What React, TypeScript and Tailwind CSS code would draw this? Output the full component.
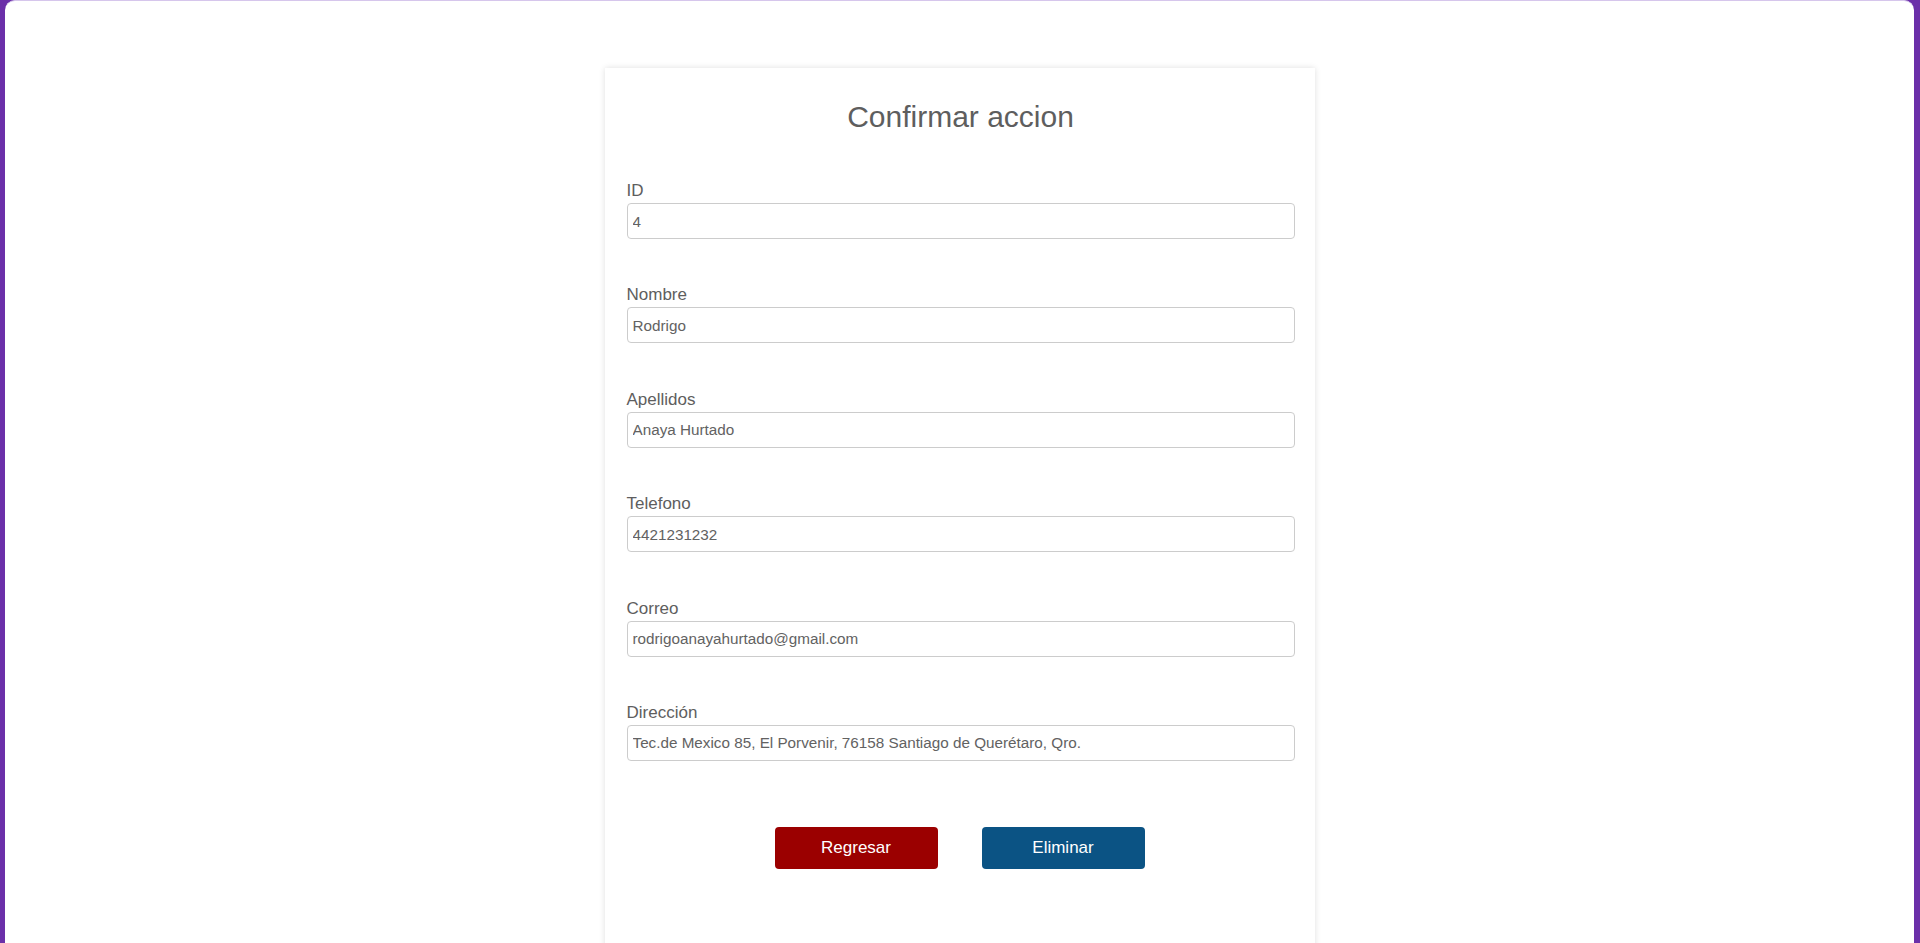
import React from "react";

const fields: { label: string; value: string }[] = [
  { label: "ID", value: "4" },
  { label: "Nombre", value: "Rodrigo" },
  { label: "Apellidos", value: "Anaya Hurtado" },
  { label: "Telefono", value: "4421231232" },
  { label: "Correo", value: "rodrigoanayahurtado@gmail.com" },
  { label: "Dirección", value: "Tec.de Mexico 85, El Porvenir, 76158 Santiago de Querétaro, Qro." },
];

export default function App() {
  return (
    <div
      className="h-[943px] overflow-hidden bg-[#6b2fa9] flex pl-[5px] pr-[6px]"
      style={{ fontFamily: '"Liberation Sans", Arial, sans-serif' }}
    >
      <div className="flex-1 bg-white rounded-t-[10px] border-t border-[#d6c6ec] pt-[67px] overflow-hidden">
        <div className="mx-auto w-[710px] min-h-[900px] bg-white shadow-[0_0_6px_rgba(0,0,0,0.13)] pl-[22px] pr-[20px] pt-[32px]">
          <h1 className="text-[30px] leading-[34px] text-center text-[#5e5e5e] font-normal">
            Confirmar accion
          </h1>
          <form className="mt-[47px]">
            {fields.map((f, i) => (
              <div key={f.label} className={i === 0 ? "" : "mt-[46.4px]"}>
                <label className="block text-[17px] leading-[20px] text-[#5e5e5e] mb-[2px]">
                  {f.label}
                </label>
                <input
                  readOnly
                  value={f.value}
                  className="block w-full h-[36px] border border-[#cccccc] rounded-[4px] px-[5px] text-[15.25px] text-[#626262] bg-white outline-none"
                />
              </div>
            ))}
            <div className="mt-[66px] -ml-[2px] flex justify-center gap-[44px]">
              <button
                type="button"
                className="w-[163px] h-[42px] rounded-[4px] bg-[#9b0000] text-white text-[17px]"
              >
                Regresar
              </button>
              <button
                type="button"
                className="w-[163px] h-[42px] rounded-[4px] bg-[#0b5384] text-white text-[17px]"
              >
                Eliminar
              </button>
            </div>
          </form>
        </div>
      </div>
    </div>
  );
}
